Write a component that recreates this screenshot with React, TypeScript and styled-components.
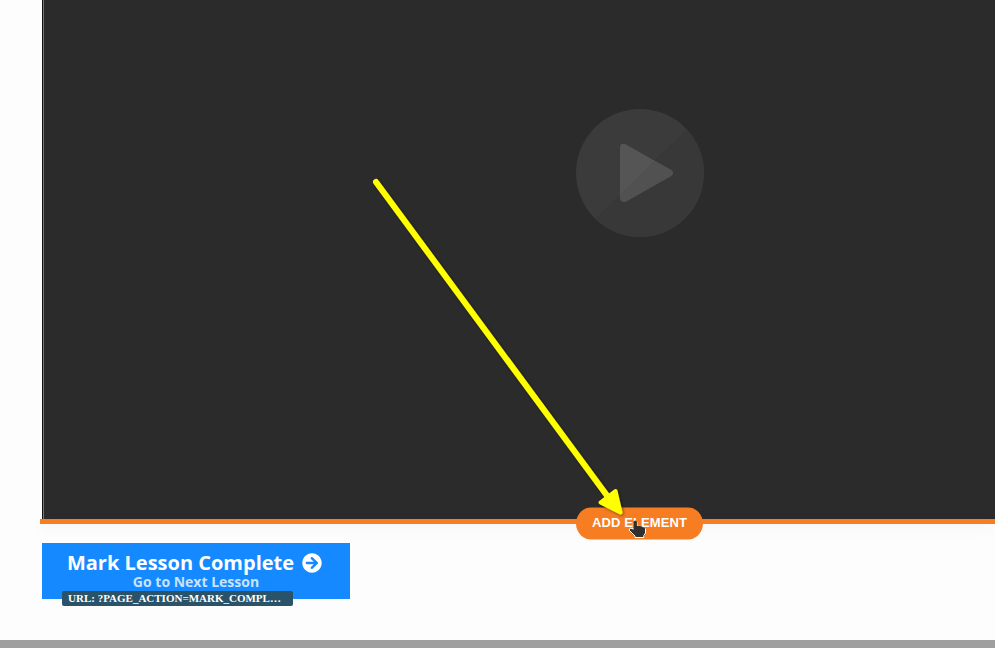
import React from "react";
import styled, { createGlobalStyle } from "styled-components";
import { FaArrowCircleRight } from "react-icons/fa";

const GlobalStyle = createGlobalStyle`
  * { box-sizing: border-box; }
  body { margin: 0; overflow: hidden; background: #fdfdfd; }
`;

const Page = styled.main`
  position: relative;
  display: flex;
  flex-direction: column;
  width: 995px;
  height: 648px;
  overflow: hidden;
  background: #fdfdfd;
  border-bottom: 8px solid #9f9f9f;
`;

const Video = styled.section`
  display: flex;
  flex: none;
  height: 519px;
  margin-left: 42px;
  padding: 109px 0 0 532px;
  background: #2b2b2b;
  border-left: 1px solid #111;
  box-shadow: inset 1px 0 0 #777;
`;

const PlayIcon = styled.svg`
  display: block;
  width: 130px;
  height: 128px;
`;

const Divider = styled.div`
  position: relative;
  flex: none;
  height: 5px;
  margin-left: 40px;
  background: #f67d22;
  box-shadow: 0 4px 14px rgba(0, 0, 0, 0.06);
`;

const AddButton = styled.button`
  position: absolute;
  left: 536px;
  top: -12px;
  width: 127px;
  height: 33px;
  padding: 0 0 2px;
  border: 0;
  border-radius: 16.5px;
  background: linear-gradient(#f67d2280 1px, #f67d22 1px, #f67d22 32px, #f67d2280 32px);
  color: #fff;
  font: bold 13px/31px "Liberation Sans", Arial, sans-serif;
  letter-spacing: 0.12px;
  white-space: nowrap;
`;

const Lesson = styled.div`
  position: relative;
  flex: none;
  width: 308px;
  height: 56px;
  margin: 19px 0 0 42px;
  padding-top: 7px;
  background: #1589ff;
  color: #fff;
  font-family: "Open Sans", sans-serif;
  text-align: center;
`;

const Title = styled.div`
  display: flex;
  align-items: center;
  justify-content: center;
  gap: 8px;
  padding-right: 3px;
  height: 25px;
  font-size: 20px;
  font-weight: 700;
  line-height: 25px;
  white-space: nowrap;
`;

const Subtitle = styled.div`
  height: 14px;
  font-size: 14px;
  font-weight: 700;
  line-height: 14px;
  color: #c9e3ff;
`;

const UrlTag = styled.div`
  position: absolute;
  left: 20px;
  top: 48px;
  width: 231px;
  height: 15px;
  padding-left: 6px;
  border-radius: 2px;
  background: #2a5269;
  color: #fff;
  font: bold 11px/15px "Liberation Serif", serif;
  text-align: left;
  white-space: nowrap;
`;

const Overlay = styled.svg`
  position: absolute;
  inset: 0;
  pointer-events: none;
`;

export default function App() {
  return (
    <>
      <GlobalStyle />
      <Page>
        <Video>
          <PlayIcon viewBox="0 0 130 128">
            <defs>
              <clipPath id="lower"><path d="M130 0L0 128H130Z" transform="translate(2 0)" /></clipPath>
            </defs>
            <circle cx="65" cy="64" r="64" fill="#3b3b3b" />
            <circle cx="65" cy="64" r="64" fill="#383838" clipPath="url(#lower)" />
            <path d="M45 39Q45 33 51 35.5L96 61Q100 64 96 67L51 92.500Q46 94 45 89Z" fill="#555" />
            <path d="M45 39Q45 33 51 35.5L96 61Q100 64 96 67L51 92.500Q46 94 45 89Z" fill="#515151" clipPath="url(#lower)" />
          </PlayIcon>
        </Video>
        <Divider><AddButton>ADD ELEMENT</AddButton></Divider>
        <Lesson>
          <Title>
            Mark Lesson Complete
            <FaArrowCircleRight size={20} />
          </Title>
          <Subtitle>Go to Next Lesson</Subtitle>
          <UrlTag>URL: ?PAGE_ACTION=MARK_COMPL…</UrlTag>
        </Lesson>
        <Overlay width="995" height="640" viewBox="0 0 995 640">
          <defs>
            <filter id="shade" x="-10%" y="-10%" width="120%" height="120%">
              <feDropShadow dx="1" dy="1" stdDeviation="1.500" floodOpacity="0.5" />
            </filter>
          </defs>
          <g filter="url(#shade)">
            <path d="M376 182L611 501" stroke="#ff0" strokeWidth="6" strokeLinecap="round" />
            <path d="M600.500 502.500L615.500 491L620.500 512.500Z" fill="#ff0" stroke="#ff0" strokeWidth="4" strokeLinejoin="round" />
          </g>
          <path d="M633.500 522Q635 519.500 636.800 522V526H640L645 528.500V534L643.500 537H635.500L629.500 530.500L630.500 528.500L633.500 530Z" fill="#303030" stroke="#303030" strokeWidth="0.500" strokeLinejoin="round" />
          <path d="M633.500 529L630.500 528L629 530L635 536V537.500H643.800V535.500L645.500 533V528.500" fill="none" stroke="#fff" strokeWidth="1" strokeLinejoin="round" />
          <path d="M637.500 522V526M633 522V529" stroke="#fff" strokeWidth="0.700" opacity="0.700" />
        </Overlay>
      </Page>
    </>
  );
}
